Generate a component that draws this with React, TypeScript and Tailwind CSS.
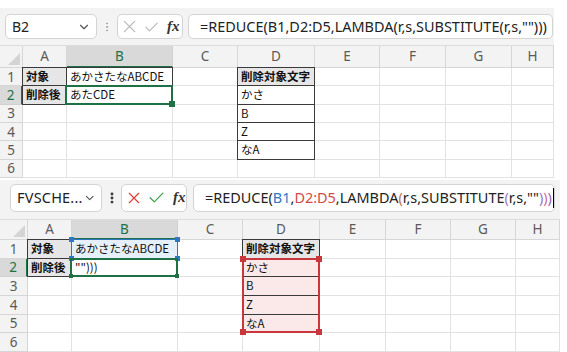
import React from "react";
import { ChevronDown, EllipsisVertical } from "lucide-react";

const COLS = ["A", "B", "C", "D", "E", "F", "G", "H"];
const GRID = "border-r border-b border-[#e2e2e2]";
const CELLFONT = "font-['Noto_Sans_CJK_JP','Noto_Sans',sans-serif] text-[11.5px] text-[#111]";
const HDRFONT = "font-['Noto_Sans','Open_Sans',sans-serif] text-[13.5px] text-[#5a5a5a]";

type V = "top" | "bottom";

function XIcon({ color, size }: { color: string; size: number }) {
  return (
    <svg width={size} height={size} viewBox="0 0 14 14">
      <path d="M1.5 1.5 L12.5 12.5 M12.5 1.5 L1.5 12.5" stroke={color} strokeWidth="1.4" fill="none" strokeLinecap="round" />
    </svg>
  );
}

function CheckIcon({ color, w, h }: { color: string; w: number; h: number }) {
  return (
    <svg width={w} height={h} viewBox="0 0 16 12">
      <path d="M1 6.2 L5.6 10.8 L15 1.2" stroke={color} strokeWidth="1.4" fill="none" strokeLinecap="round" strokeLinejoin="round" />
    </svg>
  );
}

function Formula({ colored }: { colored: boolean }) {
  if (!colored) {
    return <span>=REDUCE(B1,D2:D5,LAMBDA(r,s,SUBSTITUTE(r,s,"")))</span>;
  }
  return (
    <span>
      =REDUCE(<span className="text-[#2f77c4]">B1</span>,<span className="text-[#d04a4a]">D2:D5</span>,LAMBDA
      <span className="text-[#c0704a]">(</span>r,s,SUBSTITUTE<span className="text-[#9a78c8]">(</span>r,s,""
      <span className="text-[#9a78c8]">)</span>
      <span className="text-[#d0709a]">)</span>
      <span className="text-[#8a6ab8]">)</span>
    </span>
  );
}

function FormulaBar({ v }: { v: V }) {
  const top = v === "top";
  return (
    <div
      className={
        top
          ? "flex items-center h-[38px] w-[554px] bg-[#f3f3f3] pl-[5px] border-b border-[#dcdcdc]"
          : "flex items-start pt-[4px] h-[40px] w-[560px] bg-[#f3f3f3] pl-[10px] border-b border-[#dcdcdc]"
      }
    >
      <div
        className={
          top
            ? "flex items-center justify-between w-[92px] h-[25px] bg-white rounded-[5px] border border-[#d4d4d4] pl-[6px] pr-[5px]"
            : "flex items-center justify-between w-[92px] h-[28px] bg-white rounded-[5px] border border-[#d4d4d4] pl-[6px] pr-[5px]"
        }
      >
        <span
          className={
            top
              ? "font-['Noto_Sans',sans-serif] text-[14px] text-[#222]"
              : "font-['Noto_Sans',sans-serif] text-[14.5px] text-[#222] tracking-[0.2px]"
          }
        >
          {top ? "B2" : "FVSCHE..."}
        </span>
        <ChevronDown size={14} strokeWidth={2} color="#555" />
      </div>
      <div className={top ? "w-[20px] h-[25px] flex items-center justify-center" : "w-[19px] h-[28px] flex items-center justify-center"}>
        <EllipsisVertical size={top ? 12 : 14} strokeWidth={top ? 2 : 3} color={top ? "#9a9a9a" : "#333"} />
      </div>
      <div
        className={
          top
            ? "flex items-center w-[66px] h-[25px] bg-white rounded-[5px] border border-[#d4d4d4] pl-[5px] gap-[9px]"
            : "flex items-center w-[66px] h-[28px] bg-white rounded-[5px] border border-[#d4d4d4] pl-[6px] gap-[9px]"
        }
      >
        <XIcon color={top ? "#b9b9b9" : "#e0403c"} size={top ? 13 : 12} />
        <CheckIcon color={top ? "#b9b9b9" : "#3ea350"} w={top ? 13 : 15} h={top ? 10 : 11} />
        <span className="font-['Liberation_Serif',serif] italic font-bold text-[15px] text-[#333] leading-none">fx</span>
      </div>
      <div
        className={
          top
            ? "flex items-center ml-[5px] w-[365px] h-[25px] bg-white rounded-[5px] border border-[#d4d4d4] pl-[11px] font-['Noto_Sans',sans-serif] text-[14.45px] text-[#222] whitespace-nowrap overflow-hidden"
            : "flex items-center ml-[6px] w-[362px] h-[28px] bg-white rounded-[5px] border border-[#d4d4d4] pl-[11px] font-['Noto_Sans',sans-serif] text-[14.45px] text-[#222] whitespace-nowrap overflow-hidden"
        }
      >
        <Formula colored={!top} />
        {!top && <span className="ml-[1px] w-px h-[20px] bg-black shrink-0" />}
      </div>
    </div>
  );
}

function Corner() {
  return (
    <div className="relative bg-[#f3f3f3] border-r border-b border-[#d6d6d6] flex items-end justify-end p-[2px]">
      <svg width="12" height="12" viewBox="0 0 12 12">
        <path d="M12 0 L12 12 L0 12 Z" fill="#d4d4d4" />
      </svg>
    </div>
  );
}

function ColHeader({ c }: { c: string }) {
  const sel = c === "B";
  return (
    <div
      className={
        sel
          ? `relative flex items-center justify-center bg-[#d9d9d9] border-r border-[#d0d0d0] border-b-2 border-b-[#1e7145] ${HDRFONT} !text-[#1e7145]`
          : `relative flex items-center justify-center bg-[#f3f3f3] border-r border-b border-[#d6d6d6] ${HDRFONT}`
      }
    >
      {c}
    </div>
  );
}

function RowHeader({ r }: { r: number }) {
  const sel = r === 2;
  return (
    <div
      className={
        sel
          ? `flex items-center justify-center bg-[#d9d9d9] border-b border-[#d0d0d0] border-r-2 border-r-[#1e7145] ${HDRFONT} !text-[#1e7145]`
          : `flex items-center justify-center bg-[#f3f3f3] border-r border-b border-[#d6d6d6] ${HDRFONT}`
      }
    >
      {r}
    </div>
  );
}

function Sq({ pos, color, s }: { pos: string; color: string; s: number }) {
  return <div className={`absolute ${pos}`} style={{ width: s, height: s, background: color }} />;
}

function CellBox({ v, r, c }: { v: V; r: number; c: string }) {
  const top = v === "top";
  const key = `${c}${r}`;
  const base = `relative flex items-center pl-[3px] whitespace-nowrap ${GRID} ${CELLFONT}`;
  const box = <div className="absolute -inset-px border border-[#3a3a3a] pointer-events-none z-10" />;

  switch (key) {
    case "A1":
      return (
        <div className={`${base} bg-[#e7e6e6] font-bold`}>
          対象
          {box}
        </div>
      );
    case "A2":
      return (
        <div className={`${base} bg-[#e7e6e6] font-bold`}>
          削除後
          {box}
        </div>
      );
    case "B1":
      if (top)
        return (
          <div className={base}>
            あかさたなABCDE
            {box}
          </div>
        );
      return (
        <div className={`${base} bg-[#e6f0fa]`}>
          あかさたなABCDE
          <div className="absolute -inset-px border border-[#2f77c4] pointer-events-none z-20">
            <Sq pos="-left-[3px] -top-[3px]" color="#2f77c4" s={5} />
            <Sq pos="-right-[3px] -top-[3px]" color="#2f77c4" s={5} />
            <Sq pos="-left-[3px] -bottom-[3px]" color="#2f77c4" s={5} />
            <Sq pos="-right-[3px] -bottom-[3px]" color="#2f77c4" s={5} />
          </div>
        </div>
      );
    case "B2":
      return (
        <div className={`${base} bg-white`}>
          {top ? "あたCDE" : '"")))'}
          <div className="absolute -left-[2px] -top-[1px] -right-[1px] -bottom-[1px] border-2 border-[#1e7145] pointer-events-none z-20">
            {top ? (
              <Sq pos="-right-[4px] -bottom-[4px]" color="#1e7145" s={6} />
            ) : (
              <>
                <Sq pos="-right-[3px] -bottom-[3px]" color="#1e7145" s={4} />
                <Sq pos="-left-[3px] -bottom-[3px]" color="#1e7145" s={4} />
              </>
            )}
          </div>
        </div>
      );
    case "D1":
      return (
        <div className={`${base} bg-[#e7e6e6] font-bold`}>
          削除対象文字
          {box}
        </div>
      );
    case "D2":
    case "D3":
    case "D4":
    case "D5": {
      const txt = { D2: "かさ", D3: "B", D4: "Z", D5: "なA" }[key];
      return (
        <div className={top ? base : `${base} bg-[#fbe9e9]`}>
          {txt}
          <div className="absolute -inset-px border border-[#3a3a3a] pointer-events-none z-10" />
          {!top && key === "D2" && (
            <div className="absolute -left-[1px] -top-[1px] w-[calc(100%+2px)] h-[calc(400%+5px)] border-2 border-[#c8373d] pointer-events-none z-20">
              <Sq pos="-left-[4px] -top-[4px]" color="#c8373d" s={6} />
              <Sq pos="-right-[4px] -top-[4px]" color="#c8373d" s={6} />
              <Sq pos="-left-[4px] -bottom-[4px]" color="#c8373d" s={6} />
              <Sq pos="-right-[4px] -bottom-[4px]" color="#c8373d" s={6} />
            </div>
          )}
        </div>
      );
    }
    default:
      return <div className={base} />;
  }
}

function Sheet({ v }: { v: V }) {
  const top = v === "top";
  const rows = [1, 2, 3, 4, 5, 6];
  return (
    <div
      className={
        top
          ? "grid grid-cols-[23px_44px_106px_65px_77px_65px_66px_66px_42px] grid-rows-[22px_repeat(6,18.33px)] w-[554px]"
          : "grid grid-cols-[28px_44px_106px_65px_77px_66px_65px_65px_44px] grid-rows-[20px_repeat(6,18.67px)] w-[560px]"
      }
    >
      <Corner />
      {COLS.map((c) => (
        <ColHeader key={c} c={c} />
      ))}
      {rows.map((r) => (
        <React.Fragment key={r}>
          <RowHeader r={r} />
          {COLS.map((c) => (
            <CellBox key={c} v={v} r={r} c={c} />
          ))}
        </React.Fragment>
      ))}
    </div>
  );
}

export default function App() {
  return (
    <div className="w-[567px] h-[352px] bg-white overflow-hidden">
      <div className="pt-[8px]">
        <FormulaBar v="top" />
        <Sheet v="top" />
      </div>
      <div className="pt-[2px]">
        <FormulaBar v="bottom" />
        <Sheet v="bottom" />
      </div>
    </div>
  );
}
